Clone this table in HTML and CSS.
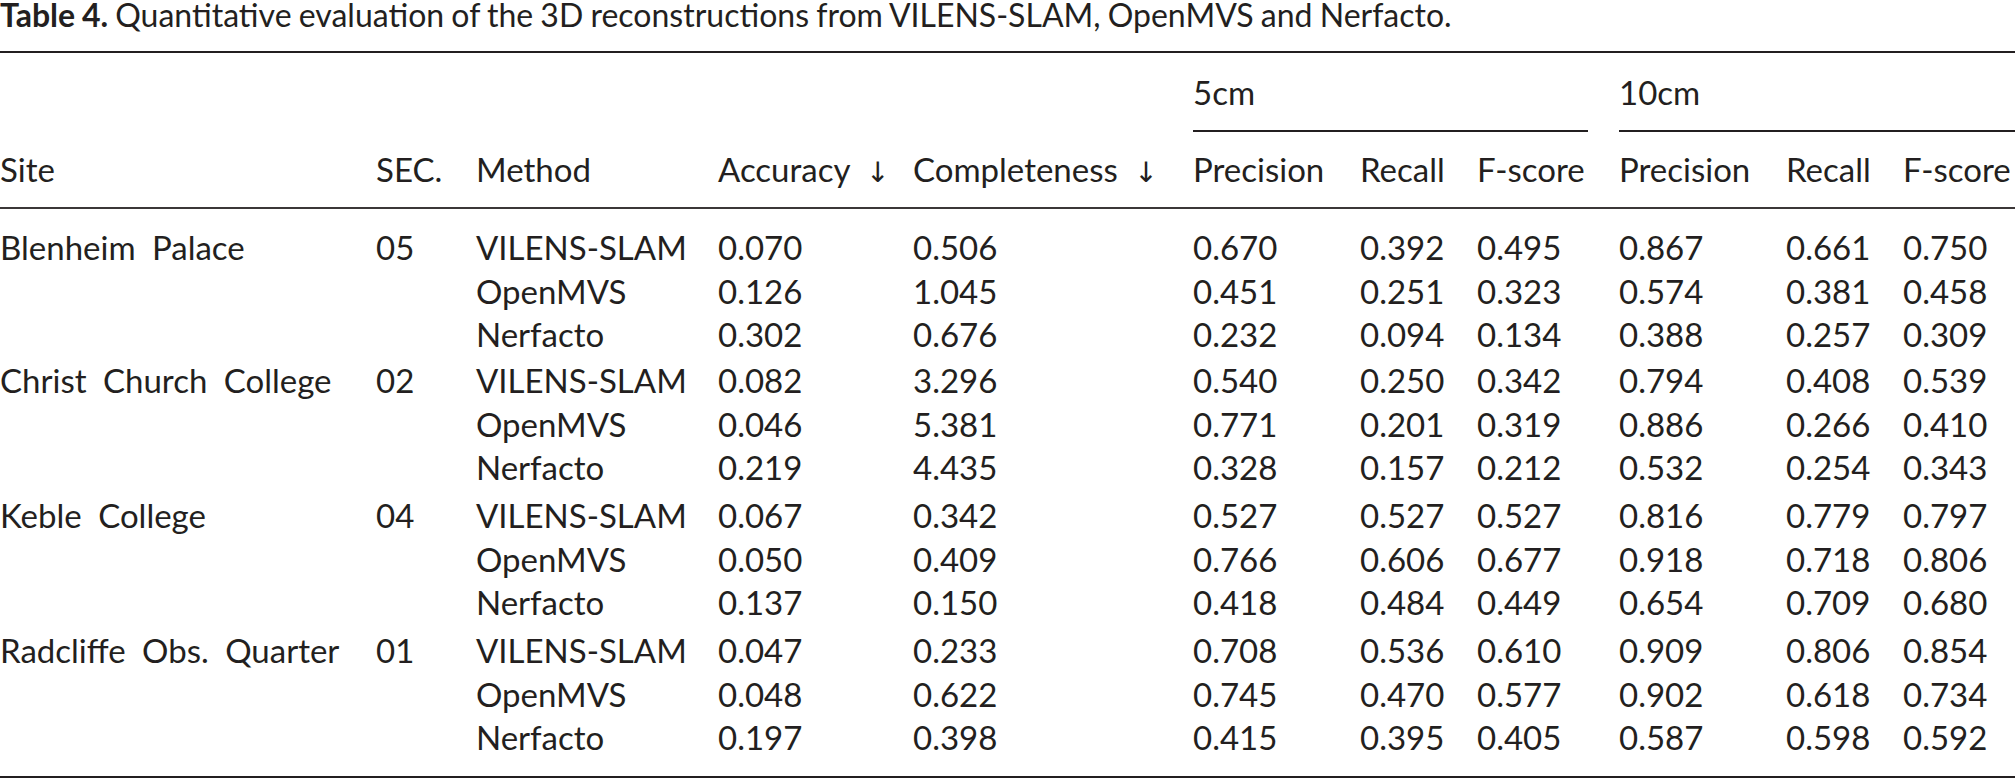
FILE: index.html
```html
<!DOCTYPE html>
<html lang="en">
<head>
<meta charset="utf-8">
<title>Table 4</title>
<link rel="stylesheet" href="styles.css">
</head>
<body>
<div class="caption"><span class="label">Table 4.</span> Quantitative evaluation of the 3D reconstructions from VILENS-SLAM, OpenMVS and Nerfacto.</div>
<table class="results">
  <colgroup>
    <col class="c-site"><col class="c-sec"><col class="c-method"><col class="c-acc"><col class="c-comp">
    <col class="c-prec"><col class="c-rec"><col class="c-f"><col class="c-prec"><col class="c-rec"><col class="c-flast">
  </colgroup>
  <thead>
    <tr class="group-row">
      <th colspan="5"></th>
      <th colspan="3" class="grp"><div class="grp-label trim">5cm</div></th>
      <th colspan="3" class="grp"><div class="grp-label">10cm</div></th>
    </tr>
    <tr class="head-row">
      <th>Site</th><th>SEC.</th><th>Method</th><th>Accuracy <span class="arrow">↓</span></th><th>Completeness <span class="arrow">↓</span></th>
      <th>Precision</th><th>Recall</th><th>F-score</th><th>Precision</th><th>Recall</th><th>F-score</th>
    </tr>
  </thead>
  <tbody class="site site-first">
    <tr><td>Blenheim Palace</td><td>05</td><td>VILENS-SLAM</td><td>0.070</td><td>0.506</td><td>0.670</td><td>0.392</td><td>0.495</td><td>0.867</td><td>0.661</td><td>0.750</td></tr>
    <tr><td></td><td></td><td>OpenMVS</td><td>0.126</td><td>1.045</td><td>0.451</td><td>0.251</td><td>0.323</td><td>0.574</td><td>0.381</td><td>0.458</td></tr>
    <tr><td></td><td></td><td>Nerfacto</td><td>0.302</td><td>0.676</td><td>0.232</td><td>0.094</td><td>0.134</td><td>0.388</td><td>0.257</td><td>0.309</td></tr>
  </tbody>
  <tbody class="site">
    <tr><td>Christ Church College</td><td>02</td><td>VILENS-SLAM</td><td>0.082</td><td>3.296</td><td>0.540</td><td>0.250</td><td>0.342</td><td>0.794</td><td>0.408</td><td>0.539</td></tr>
    <tr><td></td><td></td><td>OpenMVS</td><td>0.046</td><td>5.381</td><td>0.771</td><td>0.201</td><td>0.319</td><td>0.886</td><td>0.266</td><td>0.410</td></tr>
    <tr><td></td><td></td><td>Nerfacto</td><td>0.219</td><td>4.435</td><td>0.328</td><td>0.157</td><td>0.212</td><td>0.532</td><td>0.254</td><td>0.343</td></tr>
  </tbody>
  <tbody class="site">
    <tr><td>Keble College</td><td>04</td><td>VILENS-SLAM</td><td>0.067</td><td>0.342</td><td>0.527</td><td>0.527</td><td>0.527</td><td>0.816</td><td>0.779</td><td>0.797</td></tr>
    <tr><td></td><td></td><td>OpenMVS</td><td>0.050</td><td>0.409</td><td>0.766</td><td>0.606</td><td>0.677</td><td>0.918</td><td>0.718</td><td>0.806</td></tr>
    <tr><td></td><td></td><td>Nerfacto</td><td>0.137</td><td>0.150</td><td>0.418</td><td>0.484</td><td>0.449</td><td>0.654</td><td>0.709</td><td>0.680</td></tr>
  </tbody>
  <tbody class="site site-last">
    <tr><td>Radcliffe Obs. Quarter</td><td>01</td><td>VILENS-SLAM</td><td>0.047</td><td>0.233</td><td>0.708</td><td>0.536</td><td>0.610</td><td>0.909</td><td>0.806</td><td>0.854</td></tr>
    <tr><td></td><td></td><td>OpenMVS</td><td>0.048</td><td>0.622</td><td>0.745</td><td>0.470</td><td>0.577</td><td>0.902</td><td>0.618</td><td>0.734</td></tr>
    <tr><td></td><td></td><td>Nerfacto</td><td>0.197</td><td>0.398</td><td>0.415</td><td>0.395</td><td>0.405</td><td>0.587</td><td>0.598</td><td>0.592</td></tr>
  </tbody>
</table>
</body>
</html>
```
FILE: styles.css
```css
html, body {
  margin: 0;
  padding: 0;
  background: #ffffff;
}
body {
  color: #231f20;
  font-family: Lato, "Open Sans", "Noto Sans", sans-serif;
  width: 2015px;
  height: 779px;
  overflow: hidden;
}
.caption {
  font-size: 32px;
  line-height: 30px;
  height: 30px;
  margin-bottom: 21px;
  white-space: nowrap;
  word-spacing: -1px;
}
.caption .label {
  font-weight: 700;
}
.results {
  width: 2015px;
  table-layout: fixed;
  border-collapse: separate;
  border-spacing: 0;
  border-top: 2px solid #231f20;
  border-bottom: 2px solid #231f20;
  font-size: 33px;
  word-spacing: 8px;
}
.c-site { width: 376px; }
.c-sec { width: 100px; }
.c-method { width: 242px; }
.c-acc { width: 195px; }
.c-comp { width: 280px; }
.c-prec { width: 167px; }
.c-rec { width: 117px; }
.c-f { width: 142px; }
.c-flast { width: 112px; }
.results th,
.results td {
  padding: 0;
  text-align: left;
  vertical-align: top;
  font-weight: 400;
  white-space: nowrap;
}
.group-row th {
  padding-top: 20px;
  line-height: 38px;
}
.grp-label {
  padding-bottom: 19px;
  border-bottom: 2px solid #231f20;
}
.grp-label.trim {
  margin-right: 31px;
}
.head-row th {
  padding-top: 18px;
  padding-bottom: 19px;
  line-height: 38px;
  height: 38px;
  border-bottom: 2px solid #3b3738;
}
.arrow {
  font-family: "DejaVu Sans", sans-serif;
  font-size: 28px;
  line-height: 1;
  word-spacing: 0;
}
.results td {
  line-height: 43px;
}
.results tr:nth-child(2) td {
  line-height: 44px;
}
.site tr:first-child td {
  padding-top: 5px;
}
.site-first tr:first-child td {
  padding-top: 17px;
}
.site-first + .site tr:first-child td {
  padding-top: 3px;
}
.site-last tr:last-child td {
  padding-bottom: 17px;
}
```
